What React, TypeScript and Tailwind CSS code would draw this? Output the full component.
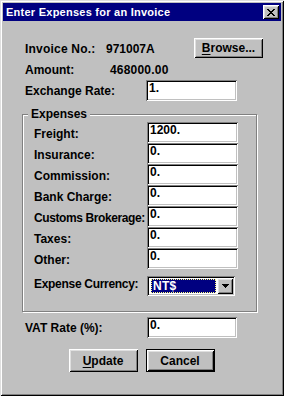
import React from "react";

const sunken = "shadow-[inset_1px_1px_#808080,inset_-1px_-1px_#fff,inset_2px_2px_#000,inset_-2px_-2px_#c0c0c0]";
const raised = "shadow-[inset_1px_1px_#fff,inset_-1px_-1px_#000,inset_2px_2px_#dfdfdf,inset_-2px_-2px_#808080]";

function Edit({ value, w = "w-[91px]" }: { value: string; w?: string }) {
    return <div className={`h-[21px] ${w} bg-white pl-[3px] pt-[1px] leading-[14px] ${sunken}`}>{value}</div>;
}

function Row({ label, value, tight }: { label: string; value: string; tight?: boolean }) {
    return (
        <div className="flex h-[21px] items-center">
            <span className={`w-[113px] pt-[2px] leading-[14px] whitespace-nowrap ${tight ? "tracking-[-0.4px]" : ""}`}>{label}</span>
            <Edit value={value} />
        </div>
    );
}

function CloseGlyph() {
    const rows = [
        [0, 2, 6, 8],
        [1, 3, 5, 7],
        [2, 6],
        [3, 5],
        [2, 6],
        [1, 3, 5, 7],
        [0, 2, 6, 8],
    ];
    return (
        <svg width="8" height="7" viewBox="0 0 8 7" shapeRendering="crispEdges">
            {rows.map((r, y) =>
                r.length === 2 ? (
                    <rect key={y} x={r[0]} y={y} width={r[1] - r[0]} height={1} fill="#000" />
                ) : (
                    <g key={y}>
                        <rect x={r[0]} y={y} width={r[1] - r[0]} height={1} fill="#000" />
                        <rect x={r[2]} y={y} width={r[3] - r[2]} height={1} fill="#000" />
                    </g>
                )
            )}
        </svg>
    );
}

function Arrow() {
    return (
        <svg width="7" height="4" viewBox="0 0 7 4" shapeRendering="crispEdges">
            <rect x="0" y="0" width="7" height="1" fill="#000" />
            <rect x="1" y="1" width="5" height="1" fill="#000" />
            <rect x="2" y="2" width="3" height="1" fill="#000" />
            <rect x="3" y="3" width="1" height="1" fill="#000" />
        </svg>
    );
}

export default function App() {
    const expenses = [
        { label: "Freight:", value: "1200." },
        { label: "Insurance:", value: "0." },
        { label: "Commission:", value: "0." },
        { label: "Bank Charge:", value: "0." },
        { label: "Customs Brokerage:", value: "0.", tight: true },
        { label: "Taxes:", value: "0." },
        { label: "Other:", value: "0." },
    ];
    return (
        <div className="w-[284px] h-[396px] bg-[#c0c0c0] p-[3px] flex flex-col text-black text-[12px] font-bold font-['Liberation_Sans',Arial,sans-serif] shadow-[inset_1px_1px_#dfdfdf,inset_-1px_-1px_#000,inset_2px_2px_#fff,inset_-2px_-2px_#808080]">
            <div className="h-[18px] bg-[#000080] flex items-center justify-between pl-[3px] pr-[2px]">
                <span className="text-white text-[11px] leading-[13px] tracking-[0.25px]">Enter Expenses for an Invoice</span>
                <div className={`w-[16px] h-[14px] bg-[#c0c0c0] flex items-center justify-center ${raised}`}>
                    <CloseGlyph />
                </div>
            </div>

            <div className="flex flex-col">
                <div className="mt-[17px] ml-[22px] flex h-[20px] items-center">
                    <span className="w-[81px] pt-[2px] leading-[14px] tracking-[0.2px]">Invoice No.:</span>
                    <span className="w-[88px] pt-[2px] leading-[14px]">971007A</span>
                    <button className={`w-[69px] h-[20px] bg-[#c0c0c0] leading-[14px] ${raised}`}>
                        <span className="underline underline-offset-2">B</span>rowse...
                    </button>
                </div>

                <div className="mt-[2px] ml-[22px] flex h-[20px] items-center">
                    <span className="w-[85px] leading-[14px]">Amount:</span>
                    <span className="leading-[14px] tracking-[0.2px]">468000.00</span>
                </div>

                <div className="ml-[22px] flex h-[21px] items-center">
                    <span className="w-[121px] leading-[14px]">Exchange Rate:</span>
                    <Edit value="1." />
                </div>

                <div className="relative mt-[13px] ml-[19px] w-[235px] h-[198px] border border-[#808080] shadow-[1px_1px_#fff,inset_1px_1px_#fff] pt-[7px] pl-[11px] flex flex-col">
                    <span className="absolute left-[5px] top-[-8px] h-[14px] px-[3px] leading-[14px] bg-[#c0c0c0]">Expenses</span>
                    {expenses.map((e) => (
                        <Row key={e.label} label={e.label} value={e.value} tight={e.tight} />
                    ))}
                    <div className="mt-[7px] flex h-[20px] items-start">
                        <span className="w-[113px] pt-[1px] leading-[14px] tracking-[-0.3px]">Expense Currency:</span>
                        <div className={`w-[88px] h-[20px] bg-white flex items-center pl-[4px] pr-[2px] gap-[1px] ${sunken}`}>
                            <div className="flex-1 h-[14px] bg-[#000080] text-white leading-[14px] outline outline-1 outline-dotted outline-[#ffff80] -outline-offset-1 pl-[2px] tracking-[0.3px]">
                                NT$
                            </div>
                            <div className={`w-[16px] h-[16px] bg-[#c0c0c0] flex items-center justify-center ${raised}`}>
                                <Arrow />
                            </div>
                        </div>
                    </div>
                </div>

                <div className="mt-[5px] ml-[22px] flex h-[21px] items-center">
                    <span className="w-[122px] leading-[14px]">VAT Rate (%):</span>
                    <Edit value="0." w="w-[90px]" />
                </div>

                <div className="mt-[11px] flex justify-center gap-[8px] pr-[1px]">
                    <button className={`w-[69px] h-[23px] bg-[#c0c0c0] leading-[14px] ${raised}`}>
                        <span className="underline underline-offset-2">U</span>pdate
                    </button>
                    <button className={`w-[69px] h-[23px] border border-black bg-[#c0c0c0] leading-[14px] ${raised}`}>
                        Cancel
                    </button>
                </div>
            </div>
        </div>
    );
}
